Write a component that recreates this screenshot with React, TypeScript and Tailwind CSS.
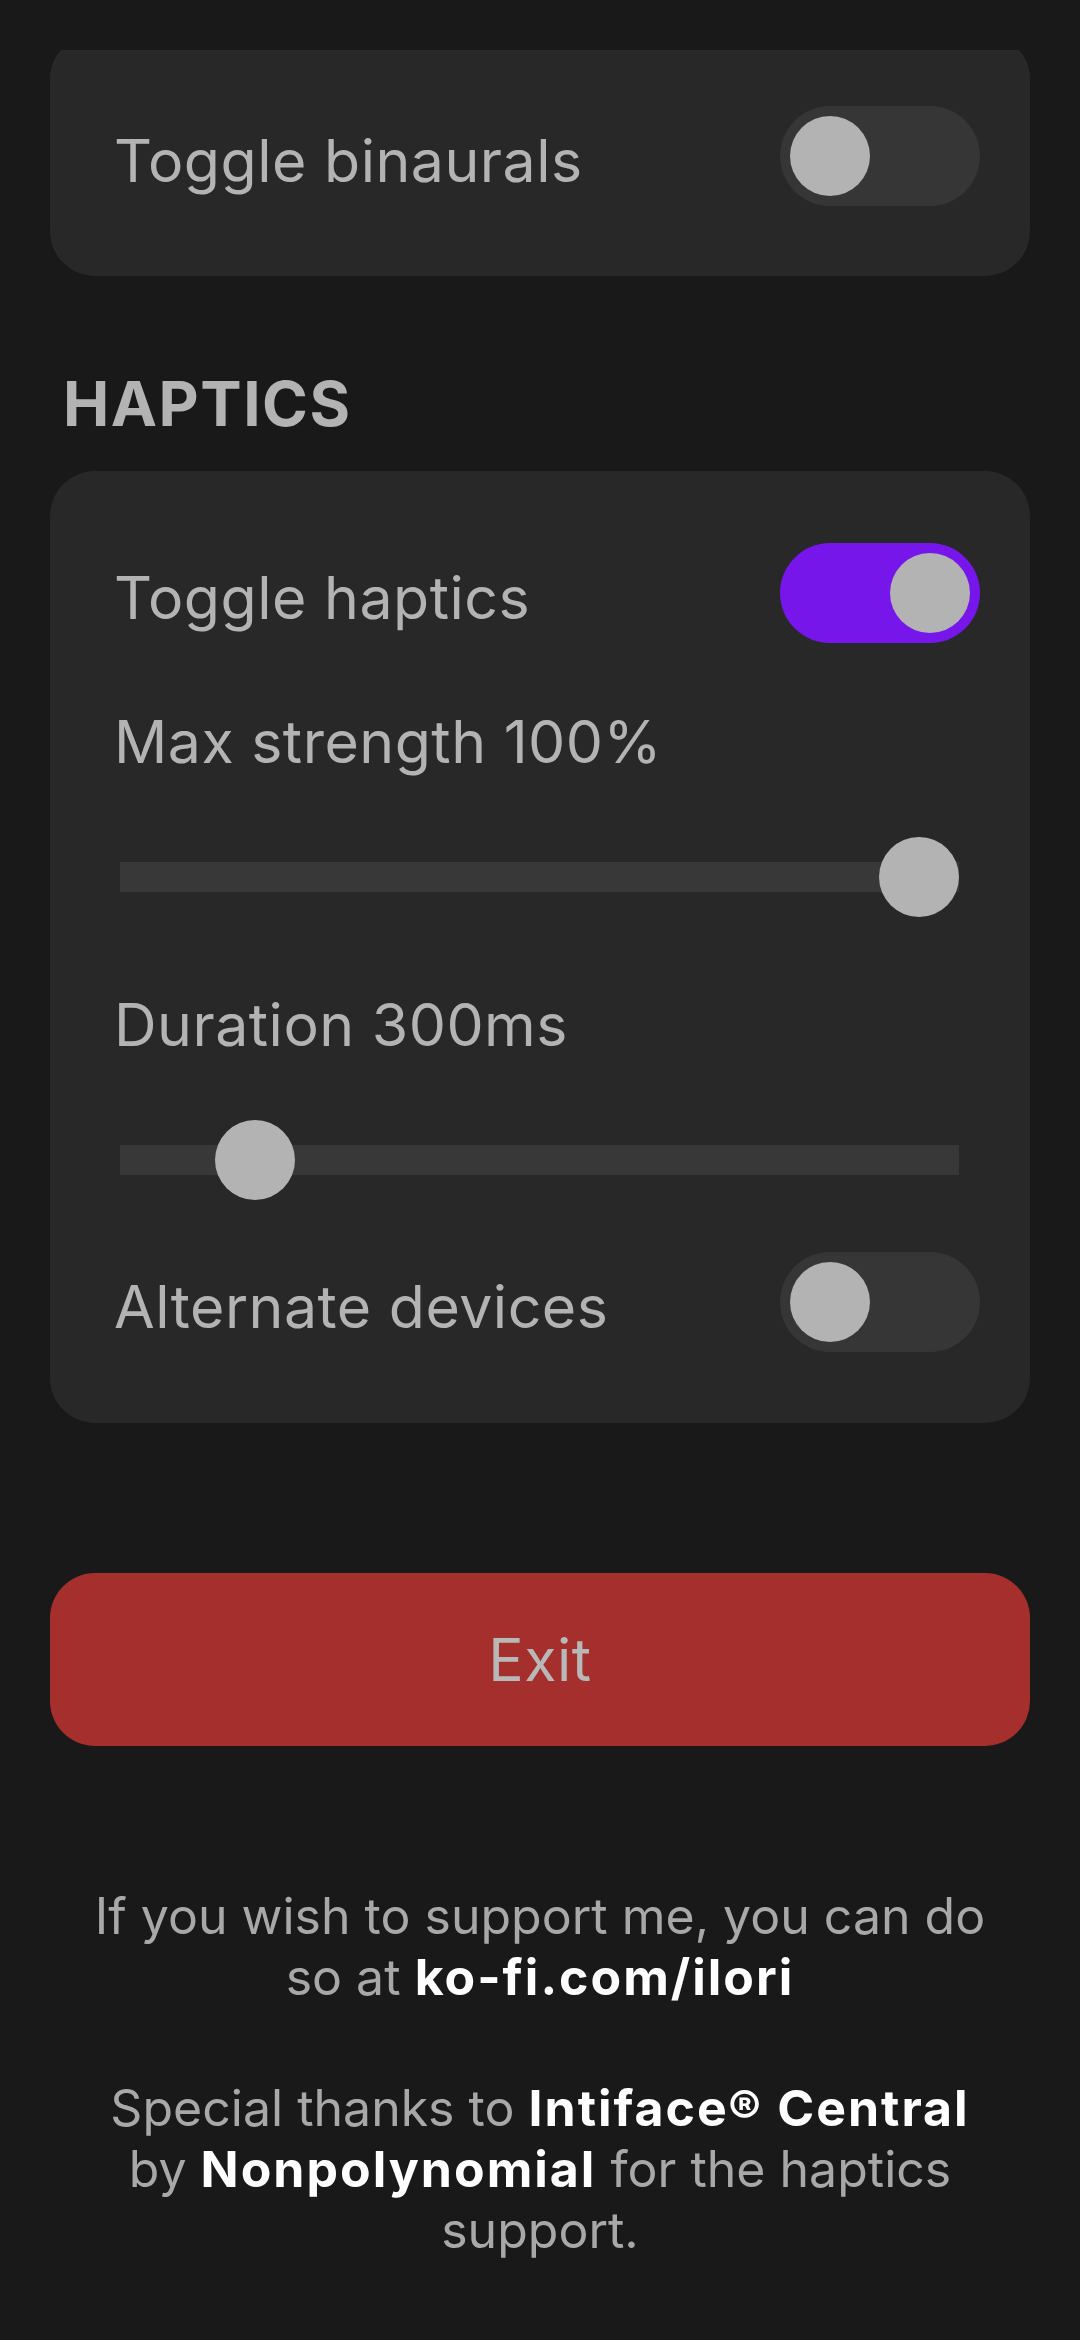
import React from "react";

function Toggle({ on }: { on: boolean }) {
  return (
    <div
      className={
        on
          ? "w-[200px] h-[100px] rounded-full bg-[#7616ea] flex items-center justify-end px-[10px] shrink-0"
          : "w-[200px] h-[100px] rounded-full bg-[#363636] flex items-center justify-start px-[10px] shrink-0"
      }
    >
      <div className="w-[80px] h-[80px] rounded-full bg-[#b3b3b3]" />
    </div>
  );
}

function ToggleRow({ label, on }: { label: string; on: boolean }) {
  return (
    <div className="flex items-center justify-between h-[100px]">
      <span className="pt-[8px] text-[59px] tracking-[0.5px] leading-none text-[#b3b3b3]">{label}</span>
      <Toggle on={on} />
    </div>
  );
}

function Slider({ fraction }: { fraction: number }) {
  return (
    <div className="relative h-[80px] ml-[6px] mr-[21px] flex items-center">
      <div className="w-full h-[30px] bg-[#383838]" />
      <div
        className="absolute top-0 w-[80px] h-[80px] rounded-full bg-[#b3b3b3]"
        style={{ left: `calc((100% - 80px) * ${fraction})` }}
      />
    </div>
  );
}

export default function App() {
  return (
    <div className="h-[2340px] bg-[#191919] overflow-hidden flex flex-col font-['Inter',sans-serif]">
      <div className="h-[50px] shrink-0 bg-[#191919]" />
      <div className="flex-1 overflow-hidden">
        <div className="-mt-[16px] flex flex-col">
          <div className="mx-[50px] rounded-[45px] bg-[#282828] pt-[72px] pb-[70px] pl-[64px] pr-[50px]">
            <ToggleRow label="Toggle binaurals" on={false} />
          </div>

          <h2 className="mt-[97px] ml-[63px] text-[62px] tracking-[1.5px] leading-none font-bold text-[#b3b3b3]">
            HAPTICS
          </h2>

          <div className="mt-[36px] mx-[50px] rounded-[45px] bg-[#282828] pt-[72px] pb-[71px] pl-[64px] pr-[50px] flex flex-col">
            <ToggleRow label="Toggle haptics" on={true} />
            <div className="mt-[69px] text-[59px] tracking-[0.5px] leading-none text-[#b3b3b3]">Max strength 100%</div>
            <div className="mt-[66px]">
              <Slider fraction={1} />
            </div>
            <div className="mt-[78px] text-[59px] tracking-[0.5px] leading-none text-[#b3b3b3]">Duration 300ms</div>
            <div className="mt-[66px]">
              <Slider fraction={0.125} />
            </div>
            <div className="mt-[52px]">
              <ToggleRow label="Alternate devices" on={false} />
            </div>
          </div>

          <button className="mt-[150px] mx-[50px] h-[173px] rounded-[45px] bg-[#a52f2c] flex items-center justify-center">
            <span className="text-[59px] tracking-[0.5px] leading-none text-[#b8b8b8]">Exit</span>
          </button>

          <div className="mt-[140px] px-[20px] text-center text-[50px] leading-[61px] text-[#a8a8a8]">
            <p>
              If you wish to support me, you can do
              <br />
              so at <span className="font-bold tracking-[2px] text-white">ko-fi.com/ilori</span>
            </p>
            <p className="mt-[70px]">
              Special thanks to <span className="font-bold tracking-[2px] text-white">Intiface® Central</span>
              <br />
              by <span className="font-bold tracking-[2px] text-white">Nonpolynomial</span> for the haptics
              <br />
              support.
            </p>
          </div>
        </div>
      </div>
    </div>
  );
}
